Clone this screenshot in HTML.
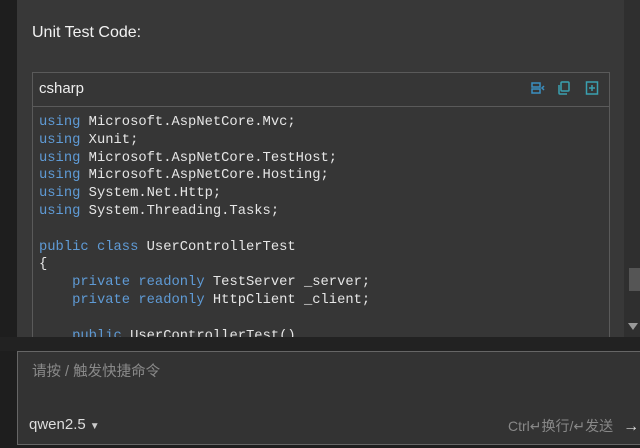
<!DOCTYPE html>
<html><head><meta charset="utf-8"><style>
body{margin:0;width:640px;height:448px;background:#1e1e1e;position:relative;overflow:hidden;font-family:"Liberation Sans","Noto Sans CJK SC",sans-serif}
.panel{position:absolute;left:17px;top:0;width:607px;height:337px;background:#383838}
.sb{position:absolute;left:624px;top:0;width:16px;height:337px;background:#2f2f2f}
.thumb{position:absolute;left:629px;top:268px;width:11px;height:23px;background:#555}
.arr{position:absolute;left:628px;top:323px;width:0;height:0;border-left:5px solid transparent;border-right:5px solid transparent;border-top:7px solid #999}
.title{position:absolute;left:32px;top:24px;color:#f2f2f2;font-size:16px}
.box{position:absolute;left:32px;top:72px;width:576px;height:270px;border:1px solid #5a5a5a;background:#363636}
.hd{height:33px;border-bottom:1px solid #5a5a5a;color:#eee;font-size:15px;line-height:31px;padding-left:6px;position:relative}
pre{margin:0;padding:7px 6px;font-family:"Liberation Mono",monospace;font-size:13.8px;line-height:17.8px;color:#e6e6e6}
.k{color:#5f9bd6}
.bot{position:absolute;left:0;top:337px;width:640px;height:14px;background:#222}
.in{position:absolute;left:17px;top:351px;width:630px;height:92px;border:1px solid #666;background:#333}
.ph{position:absolute;left:14px;top:8px;color:#8a8a8a;font-size:14.5px}
.m{position:absolute;left:11px;top:64px;color:#ddd;font-size:15px}
.m span{font-size:10px;color:#ccc;margin-left:4px}
.send{position:absolute;left:490px;top:64px;color:#888;font-size:14px}
.send b{color:#ddd;font-weight:normal;margin-left:10px;font-size:16px}
.ic{position:absolute;top:8px;width:14px;height:14px}
</style></head><body>
<div class="panel"></div><div class="sb"></div><div class="thumb"></div><div class="arr"></div>
<div class="title">Unit Test Code:</div>
<div class="box"><div class="hd">csharp
<svg class="ic" style="left:498px" viewBox="0 0 14 14" fill="none" stroke="#3a8fc0" stroke-width="1.5"><rect x="1" y="2" width="8" height="4"/><rect x="1" y="8" width="8" height="4"/><path d="M13 5l-2 2 2 2"/></svg>
<svg class="ic" style="left:524px" viewBox="0 0 14 14" fill="none" stroke="#3aa0b0" stroke-width="1.5"><rect x="4" y="1" width="8" height="9" rx="1"/><path d="M2 4v8a1 1 0 0 0 1 1h7"/></svg>
<svg class="ic" style="left:552px" viewBox="0 0 14 14" fill="none" stroke="#3aa0b0" stroke-width="1.5"><rect x="1.5" y="1" width="11" height="12"/><path d="M7 4v6M4 7h6"/></svg>
</div>
<pre><span class="k">using</span> Microsoft.AspNetCore.Mvc;
<span class="k">using</span> Xunit;
<span class="k">using</span> Microsoft.AspNetCore.TestHost;
<span class="k">using</span> Microsoft.AspNetCore.Hosting;
<span class="k">using</span> System.Net.Http;
<span class="k">using</span> System.Threading.Tasks;

<span class="k">public class</span> UserControllerTest
{
    <span class="k">private readonly</span> TestServer _server;
    <span class="k">private readonly</span> HttpClient _client;

    <span class="k">public</span> UserControllerTest()</pre></div>
<div class="bot"></div>
<div class="in"><div class="ph">请按 / 触发快捷命令</div>
<div class="m">qwen2.5<span>▼</span></div>
<div class="send">Ctrl↵换行/↵发送<b>→</b></div></div>
</body></html>
